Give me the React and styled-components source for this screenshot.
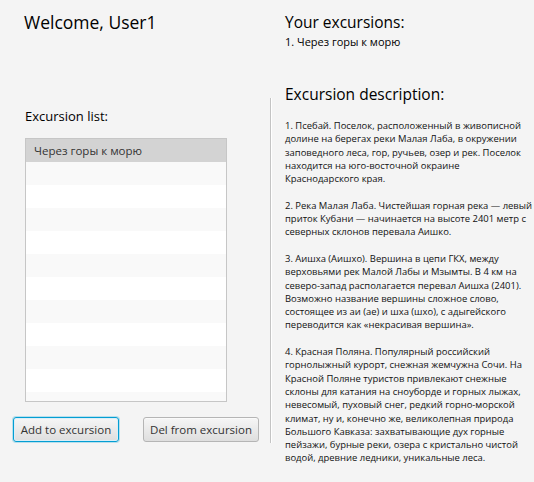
import React from "react";
import styled, { createGlobalStyle } from "styled-components";

const GlobalStyle = createGlobalStyle`
  html, body {
    margin: 0;
    padding: 0;
    background: #f4f4f4;
  }
  body {
    font-family: "Open Sans", "Noto Sans", sans-serif;
    color: #000;
  }
`;

const excursions = ["Через горы к морю"];

const description = [
  [
    "1. Псебай. Поселок, расположенный в живописной",
    "долине на берегах реки Малая Лаба, в окружении",
    "заповедного леса, гор, ручьев, озер и рек. Поселок",
    "находится на юго-восточной окраине",
    "Краснодарского края.",
  ],
  [
    "2. Река Малая Лаба. Чистейшая горная река — левый",
    "приток Кубани — начинается на высоте 2401 метр с",
    "северных склонов перевала Аишко.",
  ],
  [
    "3. Аишха (Аишхо). Вершина в цепи ГКХ, между",
    "верховьями рек Малой Лабы и Мзымты. В 4 км на",
    "северо-запад располагается перевал Аишха (2401).",
    "Возможно название вершины сложное слово,",
    "состоящее из аи (ае) и шха (шхо), с адыгейского",
    "переводится как «некрасивая вершина».",
  ],
  [
    "4. Красная Поляна. Популярный российский",
    "горнолыжный курорт, снежная жемчужна Сочи. На",
    "Красной Поляне туристов привлекают снежные",
    "склоны для катания на сноуборде и горных лыжах,",
    "невесомый, пуховый снег, редкий горно-морской",
    "климат, ну и, конечно же, великолепная природа",
    "Большого Кавказа: захватывающие дух горные",
    "пейзажи, бурные реки, озера с кристально чистой",
    "водой, древние ледники, уникальные леса.",
  ],
];

function App() {
  const rows = Array.from({ length: 12 }, (_, i) => excursions[i] || "");

  return (
    <Window>
      <GlobalStyle />
      <LeftPane>
        <Welcome>Welcome, User1</Welcome>
        <SectionLabel>Excursion list:</SectionLabel>
        <ListView>
          {rows.map((name, i) => (
            <ListCell key={i} selected={i === 0} odd={i % 2 === 1}>
              {name}
            </ListCell>
          ))}
        </ListView>
        <ButtonRow>
          <FxButton focused width={106}>Add to excursion</FxButton>
          <FxButton width={116}>Del from excursion</FxButton>
        </ButtonRow>
      </LeftPane>
      <Separator />
      <RightPane>
        <Heading>Your excursions:</Heading>
        <ChosenItem>1. Через горы к морю</ChosenItem>
        <Heading className="desc-title">Excursion description:</Heading>
        <Description>
          {description.map((para, i) => (
            <Paragraph key={i}>
              {para.map((line, j) => (
                <Line key={j}>{line}</Line>
              ))}
            </Paragraph>
          ))}
        </Description>
      </RightPane>
    </Window>
  );
}

const Window = styled.div`
  width: 534px;
  height: 482px;
  display: flex;
  background: #f4f4f4;
  overflow: hidden;
`;

const LeftPane = styled.div`
  flex: 0 0 257px;
  padding-left: 13px;
  display: flex;
  flex-direction: column;
`;

const Welcome = styled.div`
  margin: 9px 0 0 11px;
  font-size: 17.5px;
  line-height: 26px;
`;

const SectionLabel = styled.div`
  margin: 71px 0 0 12px;
  font-size: 13px;
  line-height: 20px;
`;

const ListView = styled.div`
  margin: 12px 0 0 12px;
  width: 200px;
  height: 262px;
  border: 1px solid #c6c6c6;
  background: #ffffff;
  overflow: hidden;
`;

const ListCell = styled.div`
  height: 23px;
  line-height: 23px;
  padding-left: 8px;
  font-size: 11.5px;
  color: #333333;
  white-space: nowrap;
  background: ${(p) => (p.selected ? "#d3d3d3" : p.odd ? "#f9f9f9" : "#ffffff")};
`;

const ButtonRow = styled.div`
  display: flex;
  gap: 24px;
  margin-top: 15px;
`;

const FxButton = styled.button`
  flex: 0 0 auto;
  width: ${(p) => p.width}px;
  height: 25px;
  padding: 0;
  font-family: inherit;
  font-size: 11.5px;
  color: #333333;
  white-space: nowrap;
  border-radius: 3px;
  background: linear-gradient(to bottom, #f6f6f6, #dedede);
  border: 1px solid ${(p) => (p.focused ? "#039ed3" : "#b5b5b5")};
  box-shadow: ${(p) =>
    p.focused ? "inset 0 0 0 1px #dbeef7, 0 0 0 1px rgba(3,158,211,0.25)" : "inset 0 1px 0 #fafafa"};
  cursor: pointer;
`;

const Separator = styled.div`
  flex: 0 0 1px;
  margin-top: 98px;
  height: 345px;
  background: #c4c4c4;
  box-shadow: 1px 0 0 #ffffff;
`;

const RightPane = styled.div`
  flex: 1;
  min-width: 0;
  padding-left: 14px;
  display: flex;
  flex-direction: column;

  .desc-title {
    margin-top: 33px;
  }
`;

const Heading = styled.div`
  margin-top: 11px;
  font-size: 15.5px;
  line-height: 22px;
`;

const ChosenItem = styled.div`
  margin-top: 1px;
  font-size: 11px;
  line-height: 16px;
`;

const Description = styled.div`
  margin-top: 14px;
  font-size: 9.45px;
  line-height: 13.3px;
  color: #111111;
`;

const Paragraph = styled.p`
  margin: 0 0 13.3px 0;
`;

const Line = styled.span`
  display: block;
  white-space: nowrap;
`;

export default App;
